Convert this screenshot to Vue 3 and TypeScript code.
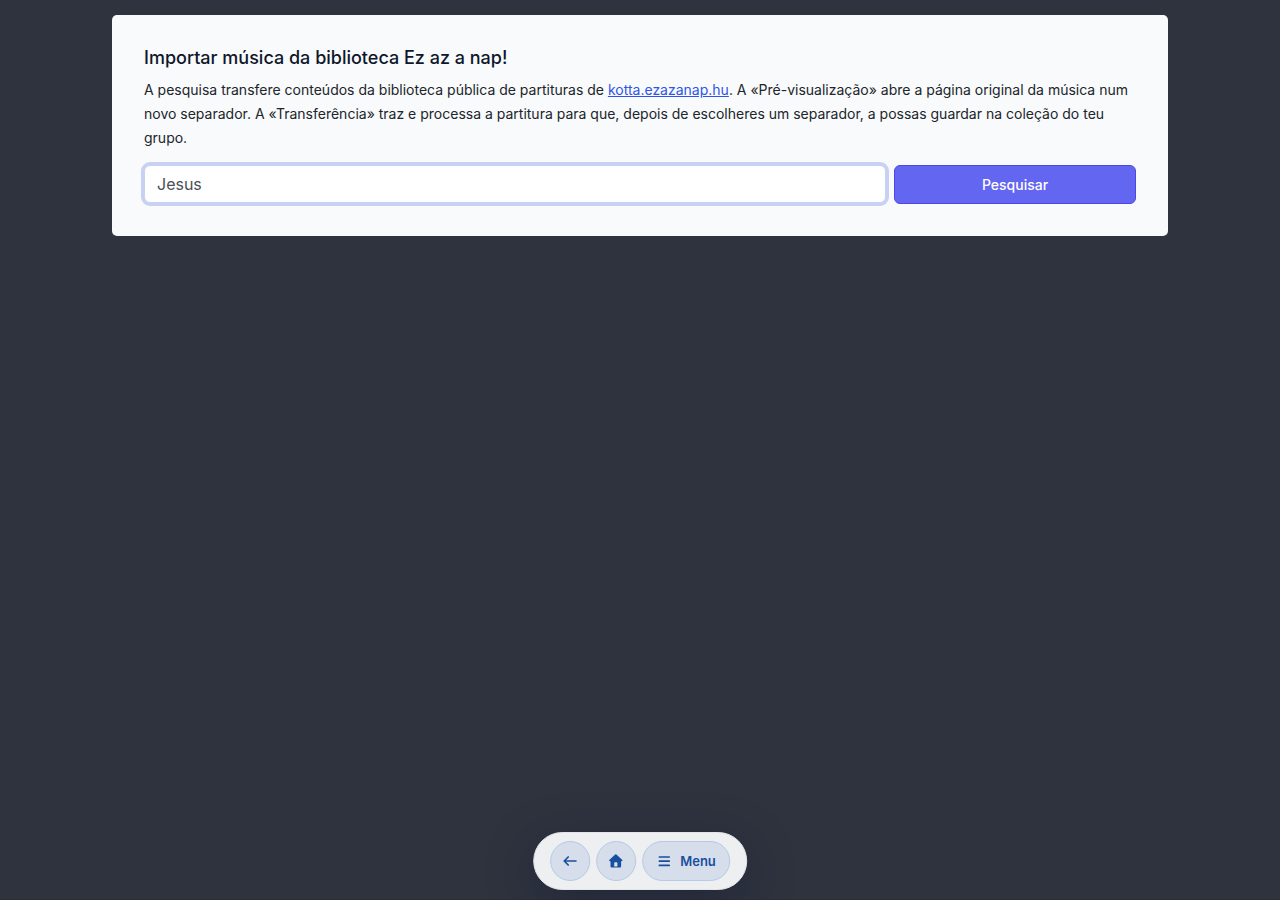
<script setup lang="ts">
import { ref } from 'vue'

const query = ref<string>('Jesus')
</script>

<template>
  <div class="page">
    <main class="card">
      <h1 class="title">Importar música da biblioteca Ez az a nap!</h1>
      <p class="intro">
        A pesquisa transfere conteúdos da biblioteca pública de partituras de
        <a href="#">kotta.ezazanap.hu</a>. A «Pré-visualização» abre a página original da música num novo separador. A
        «Transferência» traz e processa a partitura para que, depois de escolheres um separador, a possas guardar na
        coleção do teu grupo.
      </p>
      <form class="search" @submit.prevent>
        <div class="field">
          <input v-model="query" class="query" type="text" aria-label="Pesquisar música" />
        </div>
        <div class="action">
          <button class="submit" type="submit">Pesquisar</button>
        </div>
      </form>
    </main>

    <nav class="dock" aria-label="Navegação">
      <button class="pill round" type="button" aria-label="Voltar">
        <svg width="16" height="16" viewBox="0 0 16 16" aria-hidden="true">
          <path d="M13.700 8H2.200M6 4L2 8l4 4" fill="none" stroke="currentColor" stroke-width="1.700" stroke-linecap="round" stroke-linejoin="round" />
        </svg>
      </button>
      <button class="pill round" type="button" aria-label="Início">
        <svg width="16" height="16" viewBox="0 0 16 16" aria-hidden="true">
          <path
            d="M7 1.500a.9.9 0 0 1 1.200 0l5.700 5.300c.6.6.3 1.400-.5 1.400h-.5v5c0 .9-.6 1.400-1.400 1.400H3.700c-.8 0-1.400-.5-1.400-1.400v-5h-.5c-.8 0-1.100-.8-.5-1.400zM6.700 9.200a.7.700 0 0 0-.7.700v3.600h3.200V9.900a.7.700 0 0 0-.7-.7z"
            fill="currentColor"
            fill-rule="evenodd"
          />
        </svg>
      </button>
      <button class="pill menu" type="button">
        <svg width="16" height="16" viewBox="0 0 16 16" aria-hidden="true">
          <path d="M3.200 4h9.800M3.200 8.200h9.800M3.200 12.400h9.800" fill="none" stroke="currentColor" stroke-width="1.700" stroke-linecap="round" />
        </svg>
        <span>Menu</span>
      </button>
    </nav>
  </div>
</template>

<style>
body {
  background: #2f333e;
}
</style>

<style scoped>
.page {
  box-sizing: border-box;
  min-height: 100vh;
  padding: 15px 16px 96px;
  background: #2f333e;
  border-bottom: 1px solid #332c38;
  font-family: Inter, "Liberation Sans", sans-serif;
}

.card {
  box-sizing: border-box;
  max-width: 1056px;
  margin: 0 auto;
  padding: 32px;
  border-radius: 5px;
  background: #f8fafc;
  color: #212529;
}

.title {
  margin: 0 0 9px;
  color: #0f172a;
  font-size: 18px;
  font-weight: 500;
  line-height: 22px;
}

.intro {
  margin: 0 0 15px;
  font-size: 14px;
  line-height: 24px;
}

.intro a {
  color: #2f55e8;
  text-decoration: underline;
}

.search {
  display: flex;
  align-items: flex-start;
  margin: 0 -4px;
}

.field,
.action {
  box-sizing: border-box;
  padding: 0 4px;
}

.field {
  width: 75%;
}

.action {
  width: 25%;
}

.query {
  box-sizing: border-box;
  display: block;
  width: 100%;
  height: 38px;
  padding: 0 12px;
  border: 1px solid #c8d1f3;
  border-radius: 6px;
  outline: none;
  box-shadow: 0 0 0 3px #c8d1f3;
  background: #fff;
  color: #495057;
  font-family: inherit;
  font-size: 16px;
}

.submit {
  display: block;
  width: 100%;
  height: 39px;
  padding: 0 16px;
  border: 1px solid #4f46e5;
  border-radius: 6px;
  background: #6366f1;
  color: #fff;
  font-family: inherit;
  font-size: 14px;
  font-weight: 500;
  cursor: pointer;
}

.dock {
  position: fixed;
  bottom: 10px;
  left: 50%;
  box-sizing: border-box;
  display: flex;
  gap: 6px;
  padding: 8px 16px;
  border: 1px solid #e1e4e8;
  border-radius: 29px;
  background: #eeeff1;
  box-shadow: 0 12px 48px rgba(15, 23, 52, 0.4);
  transform: translateX(-50%);
}

.pill {
  box-sizing: border-box;
  display: flex;
  align-items: center;
  justify-content: center;
  height: 40px;
  border: 1px solid #b5cae6;
  border-radius: 20px;
  background: #d6deeb;
  color: #184f9e;
  font-family: inherit;
  font-size: 13px;
  font-weight: 600;
  cursor: pointer;
}

.round {
  width: 40px;
  padding: 0;
}

.menu {
  gap: 8px;
  padding: 0 13px;
}
</style>
